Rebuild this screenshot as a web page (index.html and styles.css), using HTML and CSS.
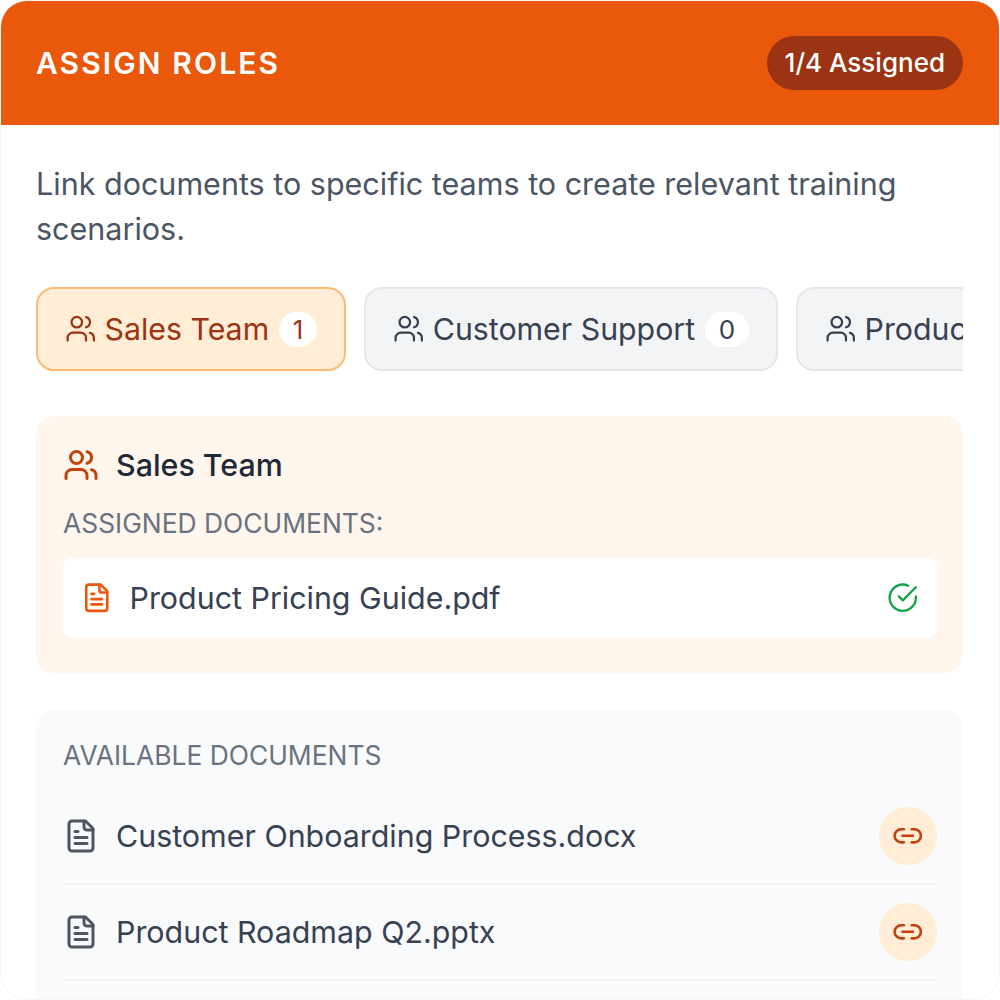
FILE: index.html
```html
<!DOCTYPE html>
<html lang="en">
<head>
    <meta charset="UTF-8">
    <title>Assign Roles</title>
    <link rel="stylesheet" href="styles.css">
</head>
<body>
    <svg class="sprite" xmlns="http://www.w3.org/2000/svg">
        <symbol id="i-users" viewBox="0 0 24 24"><path d="M16 21v-2a4 4 0 0 0-4-4H6a4 4 0 0 0-4 4v2"/><circle cx="9" cy="7" r="4"/><path d="M22 21v-2a4 4 0 0 0-3-3.87"/><path d="M16 3.13a4 4 0 0 1 0 7.75"/></symbol>
        <symbol id="i-file" viewBox="0 0 24 24"><path d="M15 2H6a2 2 0 0 0-2 2v16a2 2 0 0 0 2 2h12a2 2 0 0 0 2-2V7Z"/><path d="M14 2v4a2 2 0 0 0 2 2h4"/><path d="M10 9H8"/><path d="M16 13H8"/><path d="M16 17H8"/></symbol>
        <symbol id="i-link" viewBox="0 0 24 24"><path d="M9 17H7A5 5 0 0 1 7 7h2"/><path d="M15 7h2a5 5 0 1 1 0 10h-2"/><path d="M8 12h8"/></symbol>
        <symbol id="i-check" viewBox="0 0 24 24"><path d="M22 11.08V12a10 10 0 1 1-5.93-9.14"/><path d="M22 4 12 14.01l-3-3"/></symbol>
    </svg>

    <div class="card">
        <header class="card-header">
            <h1>ASSIGN ROLES</h1>
            <span class="progress">1/4 Assigned</span>
        </header>

        <div class="card-body">
            <p class="intro">Link documents to specific teams to create relevant training scenarios.</p>

            <div class="tabs">
                <div class="tab tab-active">
                    <svg class="icon icon-tab"><use href="#i-users"/></svg>
                    <span>Sales Team</span>
                    <span class="count">1</span>
                </div>
                <div class="tab">
                    <svg class="icon icon-tab"><use href="#i-users"/></svg>
                    <span>Customer Support</span>
                    <span class="count">0</span>
                </div>
                <div class="tab">
                    <svg class="icon icon-tab"><use href="#i-users"/></svg>
                    <span>Product</span>
                    <span class="count">0</span>
                </div>
            </div>

            <section class="team-panel">
                <div class="team-title">
                    <svg class="icon icon-team"><use href="#i-users"/></svg>
                    <h2>Sales Team</h2>
                </div>
                <div class="label">ASSIGNED DOCUMENTS:</div>
                <div class="assigned-doc">
                    <svg class="icon icon-doc-orange"><use href="#i-file"/></svg>
                    <span class="doc-name">Product Pricing Guide.pdf</span>
                    <svg class="icon icon-check"><use href="#i-check"/></svg>
                </div>
            </section>

            <section class="available-panel">
                <div class="label">AVAILABLE DOCUMENTS</div>
                <div class="doc-row">
                    <svg class="icon icon-doc"><use href="#i-file"/></svg>
                    <span class="doc-name">Customer Onboarding Process.docx</span>
                    <button class="link-btn"><svg class="icon icon-link"><use href="#i-link"/></svg></button>
                </div>
                <div class="doc-row">
                    <svg class="icon icon-doc"><use href="#i-file"/></svg>
                    <span class="doc-name">Product Roadmap Q2.pptx</span>
                    <button class="link-btn"><svg class="icon icon-link"><use href="#i-link"/></svg></button>
                </div>
            </section>
        </div>
    </div>
</body>
</html>
```

FILE: styles.css
```css
html, body {
    margin: 0;
    padding: 0;
    background-color: #fff;
}
body {
    font-family: Inter, "Liberation Sans", sans-serif;
    height: 1000px;
    overflow: hidden;
}
.sprite {
    display: none;
}
.icon {
    display: block;
    flex: none;
    fill: none;
    stroke: currentColor;
    stroke-width: 2;
    stroke-linecap: round;
    stroke-linejoin: round;
}
.card {
    width: 1000px;
    height: 1000px;
    background-color: #fff;
    border: 1px solid #f5f5f7;
    border-radius: 27px;
    overflow: hidden;
    box-sizing: border-box;
}
.card-header {
    display: flex;
    align-items: center;
    justify-content: space-between;
    height: 124px;
    padding: 0 36px 0 35px;
    background-color: #ea580c;
    color: #fff;
    box-sizing: border-box;
}
.card-header h1 {
    margin: 0;
    font-size: 30px;
    font-weight: 600;
    letter-spacing: 2.1px;
}
.progress {
    padding: 9px 18px;
    font-size: 26px;
    line-height: 36px;
    font-weight: 500;
    border-radius: 27px;
    background-color: #9a3412;
}
.card-body {
    padding: 36px 36px 36px 35px;
}
.intro {
    margin: 0 0 36px;
    font-size: 30.5px;
    line-height: 45px;
    color: #4b5563;
}
.tabs {
    display: flex;
    gap: 18.5px;
    overflow: hidden;
    margin-bottom: 45px;
}
.tab {
    display: flex;
    flex: none;
    align-items: center;
    gap: 8px;
    height: 84px;
    padding: 0 27px;
    box-sizing: border-box;
    font-size: 30.3px;
    color: #374151;
    background-color: #f3f4f6;
    border: 2px solid #e5e7eb;
    border-radius: 18px;
}
.tab-active {
    color: #9a3412;
    background-color: #ffedd5;
    border-color: #fdba74;
}
.icon-tab {
    width: 31.5px;
    height: 31.5px;
    stroke-width: 1.7;
}
.count {
    margin-left: 2px;
    padding: 0 13.5px;
    font-size: 26px;
    line-height: 35px;
    text-align: center;
    border-radius: 18px;
    background-color: #fff;
}
.team-panel {
    padding: 27px 26px 27px 27px;
    margin-bottom: 37px;
    height: 257px;
    box-sizing: border-box;
    border-radius: 18px;
    background-color: #fff7ed;
}
.team-title {
    display: flex;
    align-items: center;
    gap: 17px;
    height: 43px;
    margin-bottom: 19px;
}
.team-title h2 {
    margin: 0;
    font-size: 30.4px;
    font-weight: 500;
    color: #1f2937;
}
.icon-team {
    width: 36px;
    height: 36px;
    color: #c2410c;
}
.label {
    font-size: 26.4px;
    line-height: 36px;
    color: #6b7280;
}
.assigned-doc {
    display: flex;
    align-items: center;
    gap: 17px;
    height: 80px;
    margin-top: 17px;
    padding: 0 19px 0 18px;
    border-radius: 9px;
    background-color: #fff;
}
.doc-name {
    flex: 1;
    font-size: 30.4px;
    color: #374151;
}
.icon-doc-orange {
    width: 31.5px;
    height: 31.5px;
    color: #ea580c;
}
.icon-check {
    width: 31.5px;
    height: 31.5px;
    color: #16a34a;
    stroke-width: 1.8;
}
.available-panel {
    padding: 27px 26px 27px 27px;
    height: 500px;
    box-sizing: border-box;
    border-radius: 18px;
    background-color: #f9fafb;
}
.doc-row {
    display: flex;
    align-items: center;
    gap: 17px;
    height: 96px;
    box-sizing: border-box;
    border-bottom: 2px solid #f3f4f6;
}
.label + .doc-row {
    margin-top: 16px;
}
.icon-doc {
    width: 36px;
    height: 36px;
    color: #4b5563;
}
.link-btn {
    display: flex;
    align-items: center;
    justify-content: center;
    width: 58px;
    height: 58px;
    padding: 0;
    border: none;
    border-radius: 50%;
    background-color: #ffedd5;
    color: #c2410c;
}
.icon-link {
    width: 31.5px;
    height: 31.5px;
}
```
